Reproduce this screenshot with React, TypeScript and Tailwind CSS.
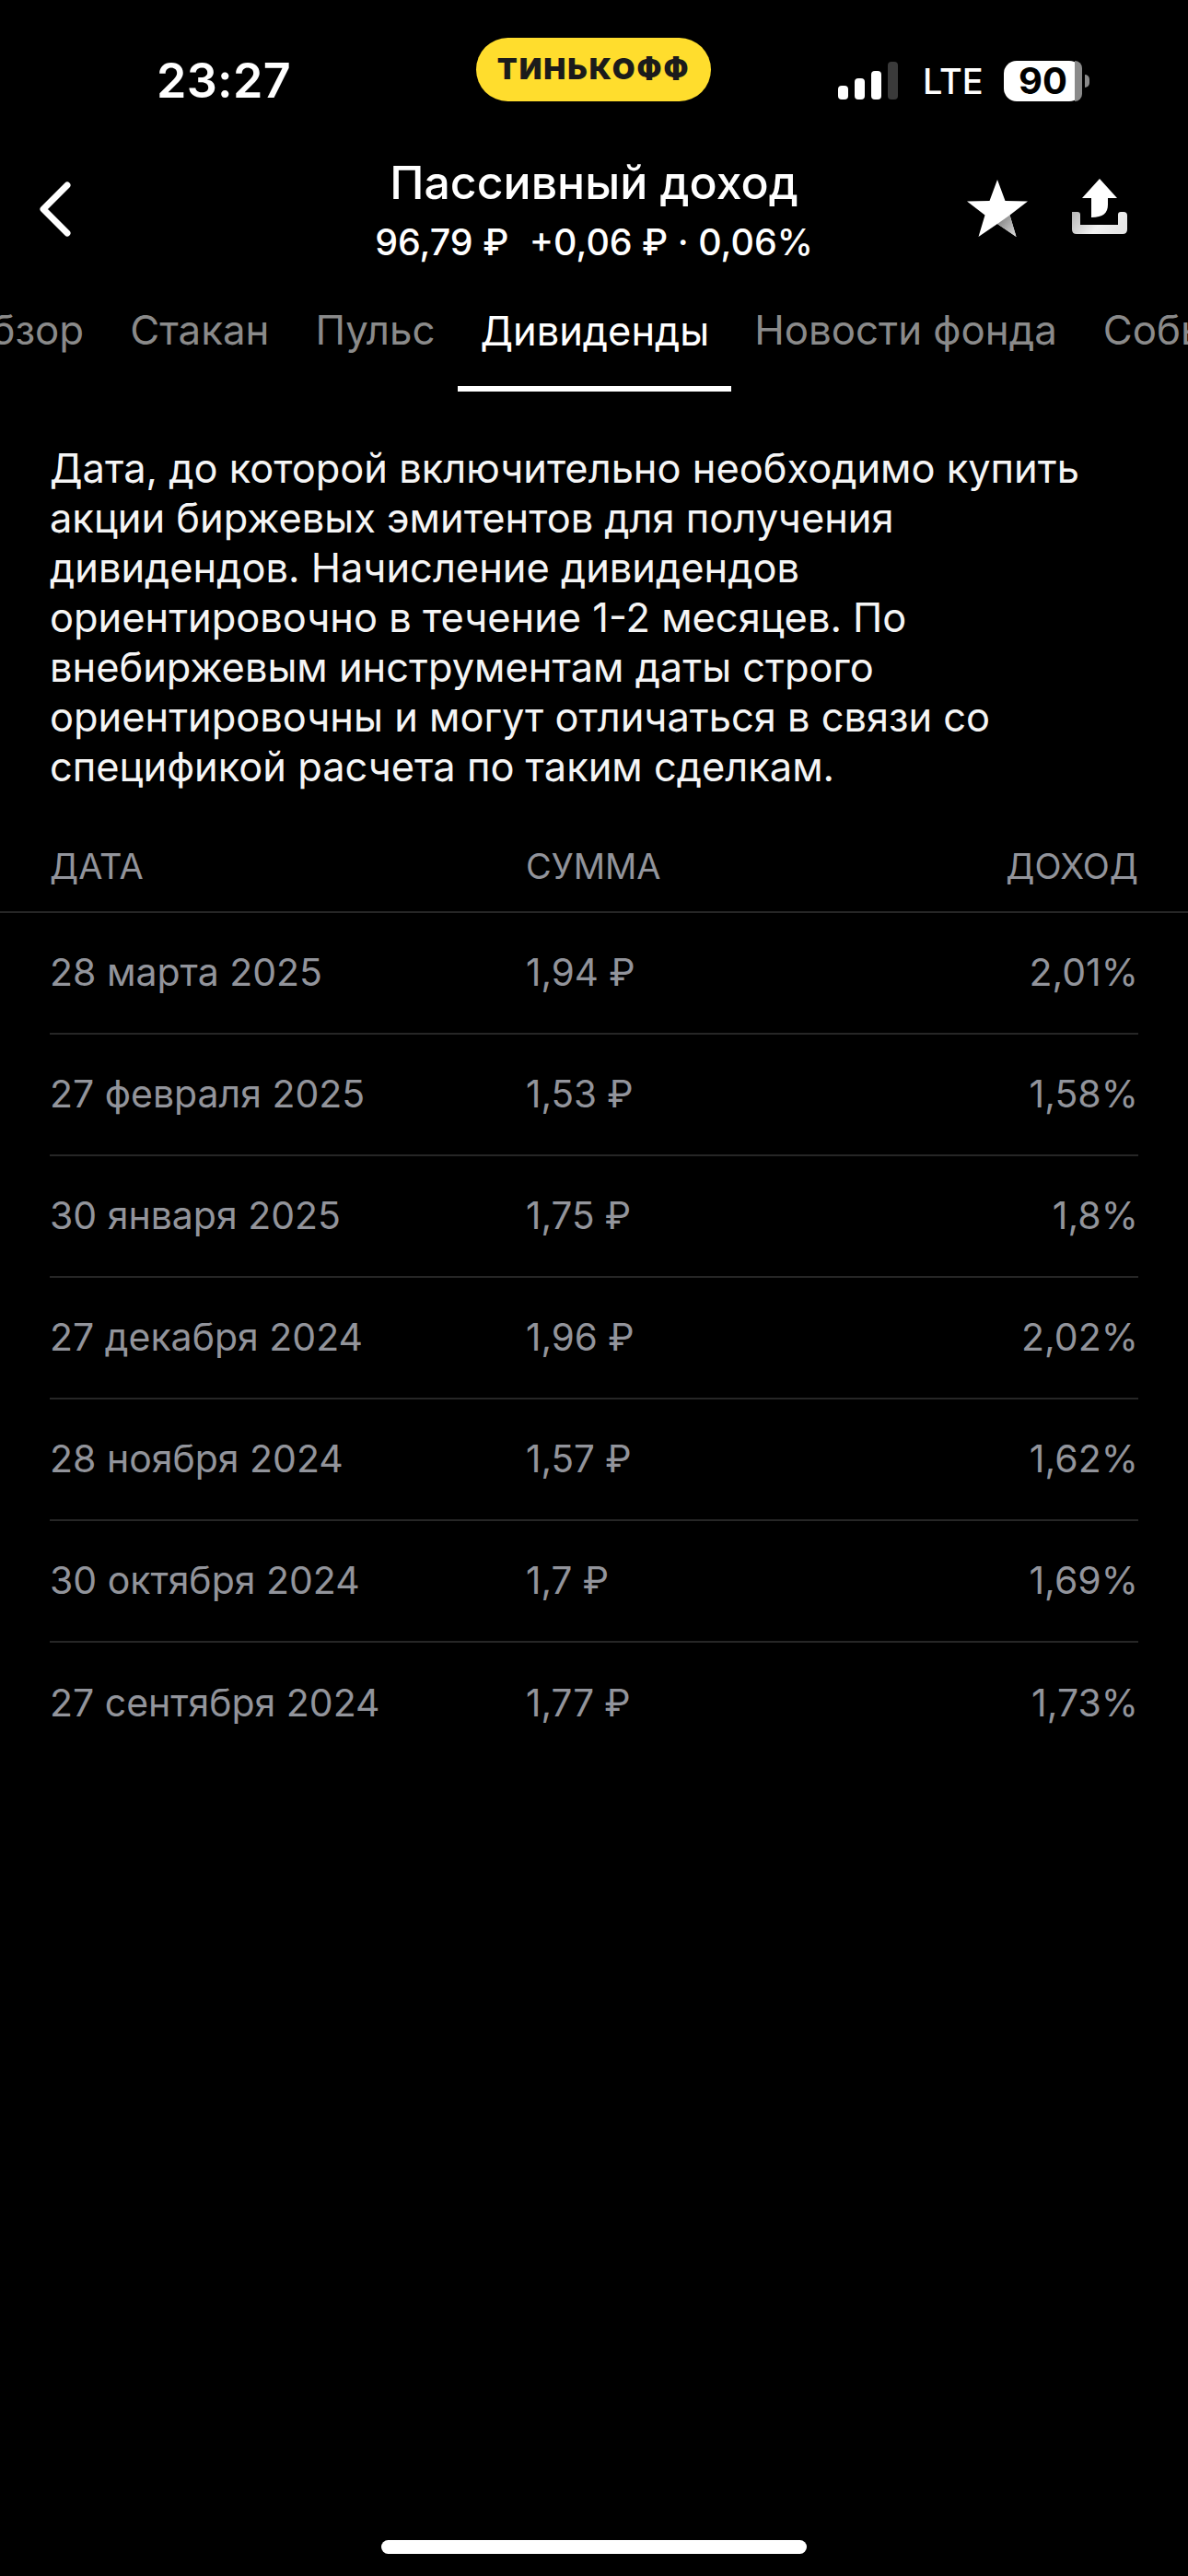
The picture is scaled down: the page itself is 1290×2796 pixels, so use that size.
import React from 'react';

const rows = [
  { date: '28 марта 2025', sum: '1,94 ₽', income: '2,01%' },
  { date: '27 февраля 2025', sum: '1,53 ₽', income: '1,58%' },
  { date: '30 января 2025', sum: '1,75 ₽', income: '1,8%' },
  { date: '27 декабря 2024', sum: '1,96 ₽', income: '2,02%' },
  { date: '28 ноября 2024', sum: '1,57 ₽', income: '1,62%' },
  { date: '30 октября 2024', sum: '1,7 ₽', income: '1,69%' },
  { date: '27 сентября 2024', sum: '1,77 ₽', income: '1,73%' },
];

const tabs = ['Обзор', 'Стакан', 'Пульс', 'Дивиденды', 'Новости фонда', 'События'];

function StatusBar() {
  return (
    <div className="flex h-[142px] items-center pl-[170px] pr-[107px] pt-[34px]">
      <span className="w-[347px] text-[52px] font-semibold leading-none tracking-[0.3px]">23:27</span>
      <div className="flex h-[69px] w-[255px] -translate-y-[13px] items-center justify-center rounded-full bg-[#ffdd2d]">
        <span className="text-[32px] font-black leading-none tracking-[2px] text-[#1b1b1b]">ТИНЬКОФФ</span>
      </div>
      <div className="ml-auto flex items-center">
        <svg width="65" height="42" viewBox="0 0 65 42" className="mr-[27px]">
          <rect x="0" y="26" width="11" height="15" rx="4" fill="#fff" />
          <rect x="18" y="18" width="11" height="23" rx="4" fill="#fff" />
          <rect x="36" y="10" width="11" height="31" rx="4" fill="#fff" />
          <rect x="54" y="0" width="11" height="41" rx="4" fill="#3a3a3a" />
        </svg>
        <span className="mr-[27px] w-[61px] text-[38px] font-medium leading-none">LTE</span>
        <div className="relative flex h-[44px] w-[85px] items-center justify-center rounded-[14px] bg-white">
          <span className="text-[40px] font-bold leading-none text-black">90</span>
          <div className="absolute right-0 top-0 h-full w-[8px] rounded-r-[14px] bg-[#8a8a8a]" />
        </div>
        <div className="ml-[3px] h-[14px] w-[5px] rounded-r-full bg-[#8a8a8a]" />
      </div>
    </div>
  );
}

function Header() {
  return (
    <div className="relative flex h-[174px] flex-col items-center pt-[27px]">
      <svg width="38" height="62" viewBox="0 0 38 62" className="absolute left-[41px] top-[54px]" fill="none">
        <path d="M32 5 L6 31 L32 57" stroke="#fff" strokeWidth="7" strokeLinecap="round" strokeLinejoin="round" />
      </svg>
      <div className="text-[50px] font-medium leading-[58px]">Пассивный доход</div>
      <div className="mt-[12px] text-[39.4px] font-medium leading-[48px]">
        96,79 ₽ <span className="ml-[12px]">+0,06 ₽ · 0,06%</span>
      </div>
      <svg width="66" height="62" viewBox="0 0 66 62" className="absolute left-[1050px] top-[53px]">
        <defs>
          <linearGradient id="starShade" x1="0" y1="0" x2="1" y2="1">
            <stop offset="0" stopColor="#777" />
            <stop offset="1" stopColor="#ddd" />
          </linearGradient>
        </defs>
        <path d="M33 0 L41.5 23 L66 23.5 L46.5 38.5 L53.5 62 L33 48 L12.5 62 L19.5 38.5 L0 23.5 L24.5 23 Z" fill="#fff" />
        <path d="M33 48 L46.5 38.5 L53.5 62 Z" fill="url(#starShade)" />
      </svg>
      <svg width="60" height="61" viewBox="0 0 60 61" className="absolute left-[1164px] top-[52px]">
        <defs>
          <linearGradient id="trayShade" x1="0" y1="0" x2="1" y2="0.3">
            <stop offset="0" stopColor="#b5b5b5" />
            <stop offset="0.6" stopColor="#f2f2f2" />
            <stop offset="1" stopColor="#e6e6e6" />
          </linearGradient>
        </defs>
        <path d="M30 0 L49 21 L39 21 L39 28 C39 37 34 42 21 42 L21 21 L11 21 Z" fill="#fff" />
        <path d="M0 36 L6 36 Q9 36 9 39 L9 50 L50 50 L50 39 Q50 36 53 36 L56 36 Q60 36 60 40 L60 55 Q60 60 55 60 L5 60 Q0 60 0 55 Z" fill="url(#trayShade)" />
      </svg>
    </div>
  );
}

function Tabs() {
  return (
    <div className="h-[109px] overflow-hidden">
      <div className="ml-[-68px] flex w-[1500px] items-start">
        {tabs.map((tab) => {
          const active = tab === 'Дивиденды';
          return (
            <div
              key={tab}
              className={
                active
                  ? 'flex h-[109px] items-start justify-center whitespace-nowrap border-b-[6px] border-white px-[24px] pt-[16px] text-[43.4px] leading-[54px] text-white'
                  : 'flex h-[109px] items-start whitespace-nowrap px-[25px] pt-[16px] text-[43.8px] leading-[54px] text-[#8a8a8a]'
              }
            >
              {tab}
            </div>
          );
        })}
      </div>
    </div>
  );
}

export default function App() {
  return (
    <div className="relative h-[2796px] w-[1290px] overflow-hidden bg-black font-['Inter','Noto_Sans',sans-serif] text-white">
      <StatusBar />
      <Header />
      <Tabs />
      <p className="mt-[56px] px-[54px] text-[43.4px] leading-[54px] text-[#f5f5f5]">
        Дата, до которой включительно необходимо купить акции биржевых эмитентов для получения дивидендов. Начисление дивидендов ориентировочно в течение 1-2 месяцев. По внебиржевым инструментам даты строго ориентировочны и могут отличаться в связи со спецификой расчета по таким сделкам.
      </p>
      <div className="mt-[48px] flex h-[84px] items-center border-b-2 border-[#262626] px-[54px] pb-[16px] text-[38px] text-[#92949b]">
        <div className="w-[517px]">ДАТА</div>
        <div className="flex-1">СУММА</div>
        <div>ДОХОД</div>
      </div>
      <div className="px-[54px]">
        {rows.map((row, i) => (
          <div
            key={row.date}
            className={
              i < rows.length - 1
                ? 'flex h-[132px] items-center border-b-2 border-[#262626] text-[41px] text-[#92949b]'
                : 'flex h-[132px] items-center text-[41px] text-[#92949b]'
            }
          >
            <div className="w-[517px]">{row.date}</div>
            <div className="flex-1 text-[40.4px]">{row.sum}</div>
            <div>{row.income}</div>
          </div>
        ))}
      </div>
      <div className="absolute bottom-[24px] left-[414px] h-[15px] w-[462px] rounded-full bg-white" />
    </div>
  );
}
